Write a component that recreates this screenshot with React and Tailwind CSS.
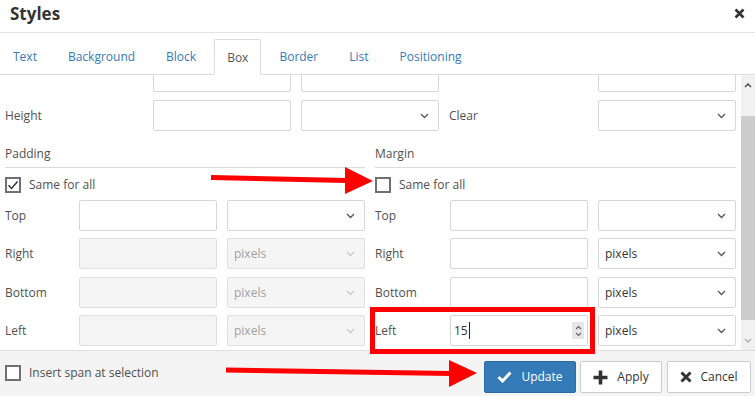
import React from "react";

const tabs = ["Text", "Background", "Block", "Box", "Border", "List", "Positioning"];

function Chevron({ light }) {
  return (
    <svg width="9" height="6" viewBox="0 0 9 6" className="shrink-0">
      <path d="M1 1l3.5 3.5L8 1" fill="none" stroke={light ? "#c8c8c8" : "#555"} strokeWidth="1.3" />
    </svg>
  );
}

function Field({ select, disabled, value, spinner }) {
  const tone = disabled
    ? "bg-[#f5f5f5] border-[#dfdfdf] text-[#a0a0a0]"
    : "bg-white border-[#d6d6d6] text-[#333]";
  return (
    <div className={`w-[138px] h-[31px] shrink-0 border rounded-[2px] flex items-center justify-between ${tone} ${select ? "pl-[6px] pr-[9px]" : "pl-[3px] pr-[3px]"}`}>
      <span className="flex items-center">
        {value}
        {spinner && <span className="ml-[1px] w-[1px] h-[17px] bg-[#222]" />}
      </span>
      {select && <Chevron light={disabled} />}
      {spinner && (
        <span className="w-[12px] h-[17px] bg-[#e6e6e6] flex flex-col items-center justify-center gap-[2px]">
          <svg width="7" height="5" viewBox="0 0 7 5"><path d="M1 4l2.5-2.5L6 4" fill="none" stroke="#666" strokeWidth="1.1" /></svg>
          <svg width="7" height="5" viewBox="0 0 7 5"><path d="M1 1l2.5 2.5L6 1" fill="none" stroke="#666" strokeWidth="1.1" /></svg>
        </span>
      )}
    </div>
  );
}

function Checkbox({ checked }) {
  return (
    <div className="w-[16px] h-[16px] shrink-0 border-2 border-[#707070] bg-white flex items-center justify-center">
      {checked && (
        <svg width="12" height="12" viewBox="0 0 12 12">
          <path d="M1.5 6.2l3 3.2 6-7" fill="none" stroke="#333" strokeWidth="1.5" />
        </svg>
      )}
    </div>
  );
}

function SideRows({ title, checked, labelW, rows }) {
  return (
    <div className="flex flex-col">
      <div className="mt-[14px] h-[23px] border-b border-[#dcdcdc] leading-[17px] text-[#505050]">{title}</div>
      <div className="mt-[9px] h-[16px] flex items-center gap-[8px] text-[#505050]">
        <Checkbox checked={checked} />
        <span>Same for all</span>
      </div>
      {rows.map((r, i) => (
        <div key={r.label} className={`flex items-center h-[31px] ${i === 2 ? "mt-[8px]" : "mt-[7px]"}`}>
          <span className={`${labelW} shrink-0 text-[#505050]`}>{r.label}</span>
          <Field disabled={r.disabled} value={r.value} spinner={r.spinner} />
          <div className="ml-[10px]">
            <Field select disabled={r.disabled} value={r.unit} />
          </div>
        </div>
      ))}
    </div>
  );
}

export default function App() {
  return (
    <div className="relative w-[755px] h-[396px] overflow-hidden bg-white flex flex-col text-[12px] font-['Open_Sans',sans-serif]">
      {/* header */}
      <div className="h-[33px] shrink-0 border-b border-[#e3e3e3] flex items-center justify-between pl-[10px] pr-[10px] pb-[5px]">
        <span className="text-[17px] font-bold text-[#333]">Styles</span>
        <svg width="11" height="11" viewBox="0 0 11 11">
          <path d="M1.5 1.5l8 8M9.5 1.5l-8 8" stroke="#333" strokeWidth="2.6" />
        </svg>
      </div>

      {/* tabs */}
      <div className="h-[42px] shrink-0 pt-[6px] border-b border-[#dddddd] flex items-end gap-[5px]">
        {tabs.map((t) =>
          t === "Box" ? (
            <div key={t} className="h-[36px] px-[12px] pt-[1px] -mb-[1px] border border-[#dddddd] border-b-white bg-white rounded-t-[2px] flex items-center text-[#555]">
              {t}
            </div>
          ) : (
            <div key={t} className="h-[35px] px-[13px] pt-[1px] flex items-center text-[#337ab7]">
              {t}
            </div>
          )
        )}
      </div>

      {/* body */}
      <div className="h-[275px] shrink-0 flex">
        <div className="w-[741px] pl-[5px] flex flex-col">
          <div className="h-[17px] overflow-hidden flex items-end">
            <div className="w-[148px] shrink-0" />
            <Field />
            <div className="ml-[10px]"><Field /></div>
            <div className="w-[159px] shrink-0" />
            <Field />
          </div>
          <div className="mt-[8px] h-[31px] flex items-center text-[#505050]">
            <span className="w-[148px] shrink-0">Height</span>
            <Field />
            <div className="ml-[10px]"><Field select /></div>
            <span className="w-[159px] shrink-0 pl-[10px]">Clear</span>
            <Field select />
          </div>
          <div className="flex gap-[10px]">
            <div className="w-[360px]">
              <SideRows
                title="Padding"
                checked
                labelW="w-[74px]"
                rows={[
                  { label: "Top" },
                  { label: "Right", disabled: true, unit: "pixels" },
                  { label: "Bottom", disabled: true, unit: "pixels" },
                  { label: "Left", disabled: true, unit: "pixels" },
                ]}
              />
            </div>
            <div className="w-[361px]">
              <SideRows
                title="Margin"
                labelW="w-[75px]"
                rows={[
                  { label: "Top" },
                  { label: "Right", unit: "pixels" },
                  { label: "Bottom", unit: "pixels" },
                  { label: "Left", unit: "pixels", value: "15", spinner: true },
                ]}
              />
            </div>
          </div>
        </div>

        {/* scrollbar */}
        <div className="w-[14px] bg-[#f1f1f1] flex flex-col items-center">
          <div className="h-[17px] w-full flex items-center justify-center pt-[3px]">
            <svg width="8" height="5" viewBox="0 0 8 5"><path d="M1 4l3-3 3 3" fill="none" stroke="#505050" strokeWidth="1.5" /></svg>
          </div>
          <div className="mt-[24px] h-[204px] w-full bg-[#cdcdcd]" />
          <div className="flex-1" />
          <div className="h-[20px] w-full flex items-center justify-center">
            <svg width="8" height="5" viewBox="0 0 8 5"><path d="M1 1l3 3 3-3" fill="none" stroke="#b0b0b0" strokeWidth="1.3" /></svg>
          </div>
        </div>
      </div>

      {/* footer */}
      <div className="flex-1 border-t border-[#dddddd] bg-[#f4f4f4] flex justify-between pl-[5px] pr-[4px]">
        <div className="pt-[14px] flex items-start gap-[8px] text-[#505050]">
          <Checkbox />
          <span className="leading-[16px]">Insert span at selection</span>
        </div>
        <div className="pt-[10px] flex items-start gap-[4px]">
          <button className="w-[92px] h-[32px] rounded-[2px] bg-[#337ab7] border border-[#2e6da4] text-white flex items-center justify-center gap-[9px]">
            <svg width="15" height="12" viewBox="0 0 15 12"><path d="M1.5 6l4 4 8-8.5" fill="none" stroke="#fff" strokeWidth="3" /></svg>
            <span>Update</span>
          </button>
          <button className="w-[82px] h-[32px] rounded-[2px] bg-white border border-[#cccccc] text-[#333] flex items-center justify-center gap-[9px]">
            <svg width="15" height="15" viewBox="0 0 15 15"><path d="M7.5 0.5v14M0.5 7.5h14" stroke="#333" strokeWidth="3.6" /></svg>
            <span>Apply</span>
          </button>
          <button className="ml-[1px] w-[84px] h-[32px] rounded-[2px] bg-white border border-[#cccccc] text-[#333] flex items-center justify-center gap-[8px]">
            <svg width="12" height="12" viewBox="0 0 12 12"><path d="M1.5 1.5l9 9M10.5 1.5l-9 9" stroke="#333" strokeWidth="3" /></svg>
            <span>Cancel</span>
          </button>
        </div>
      </div>

      {/* annotations */}
      <div className="absolute left-[370px] top-[307px] w-[225px] h-[47px] border-[5px] border-[#ff0000] pointer-events-none" />
      <svg className="absolute inset-0 pointer-events-none" width="755" height="396" viewBox="0 0 755 396">
        <path d="M211 177.5L347 180.5" stroke="#ff0000" strokeWidth="5" />
        <path d="M345 167L373 181L345 194Z" fill="#ff0000" />
        <path d="M226 370L451 373.5" stroke="#ff0000" strokeWidth="5" />
        <path d="M449 360L477 373L449 387Z" fill="#ff0000" />
      </svg>
    </div>
  );
}
